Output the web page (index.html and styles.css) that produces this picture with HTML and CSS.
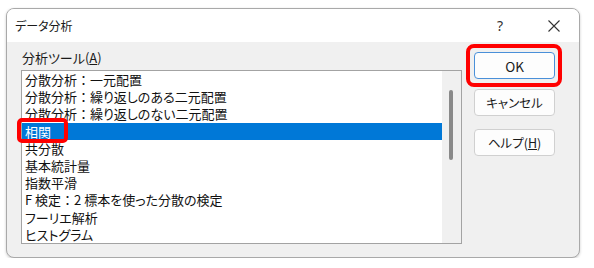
FILE: index.html
```html
<!DOCTYPE html>
<html lang="ja">
<head>
<meta charset="utf-8">
<title>データ分析</title>
<link rel="stylesheet" href="styles.css">
</head>
<body>
<div class="window">
  <div class="titlebar">
    <div class="title">データ分析</div>
    <div class="tb-btn help">?</div>
    <div class="tb-btn close">
      <svg width="12" height="12" viewBox="0 0 12 12"><path d="M0.5 0.5 L11.5 11.5 M11.5 0.5 L0.5 11.5" stroke="#333" stroke-width="1.1" fill="none"/></svg>
    </div>
  </div>
  <div class="content">
    <div class="left">
      <div class="label">分析ツール(<u>A</u>)</div>
      <div class="listbox">
        <div class="items">
          <div class="item">分散分析<span class="colon">：</span>一元配置</div>
          <div class="item">分散分析<span class="colon">：</span>繰り返しのある二元配置</div>
          <div class="item">分散分析<span class="colon">：</span>繰り返しのない二元配置</div>
          <div class="item selected">相関<span class="mark mark-item"></span></div>
          <div class="item">共分散</div>
          <div class="item">基本統計量</div>
          <div class="item">指数平滑</div>
          <div class="item">F 検定<span class="colon">：</span>2 標本を使った分散の検定</div>
          <div class="item">フーリエ解析</div>
          <div class="item">ヒストグラム</div>
        </div>
        <div class="scrollbar"><div class="thumb"></div></div>
      </div>
    </div>
    <div class="right">
      <div class="btn default">OK<span class="mark mark-ok"></span></div>
      <div class="btn">キャンセル</div>
      <div class="btn btn-help">ヘルプ(<u>H</u>)</div>
    </div>
  </div>
</div>
</body>
</html>
```
FILE: styles.css
```css
html, body {
  margin: 0;
  padding: 0;
  background: #ffffff;
}
body {
  font-family: "Noto Sans CJK JP", "Noto Sans", sans-serif;
  font-feature-settings: "palt";
  color: #1a1a1a;
  padding-top: 8px;
  padding-left: 6px;
}
.window {
  width: 572px;
  height: 248px;
  border: 1px solid #a9a9a9;
  border-radius: 8px;
  overflow: hidden;
  background: #f0f0f0;
  box-shadow: 0 1px 3px rgba(0,0,0,0.2);
  display: flex;
  flex-direction: column;
}
.titlebar {
  height: 33px;
  background: #ffffff;
  display: flex;
  align-items: center;
  flex: none;
}
.title {
  flex: 1;
  padding-left: 8px;
  font-size: 12px;
  color: #1a1a1a;
}
.tb-btn {
  width: 46px;
  height: 33px;
  display: flex;
  align-items: center;
  justify-content: center;
  color: #333;
}
.help {
  font-size: 14px;
  margin-right: 8px;
  font-family: "Noto Sans", sans-serif;
}
.close {
  margin-right: 2px;
}
.content {
  flex: 1;
  display: flex;
  padding: 10px 0 0 14px;
}
.left {
  display: flex;
  flex-direction: column;
}
.label {
  font-size: 13px;
  line-height: 16px;
  padding-left: 1px;
  margin-top: -2px;
  height: 20px;
}
.listbox {
  width: 439px;
  height: 172px;
  border: 1px solid #a3a3a3;
  background: #ffffff;
  display: flex;
}
.items {
  width: 420px;
  flex: none;
}
.item {
  position: relative;
  height: 17.2px;
  line-height: 17.2px;
  font-size: 13px;
  padding-left: 3px;
  white-space: nowrap;
  color: #111;
}
.colon {
  font-feature-settings: normal;
}
.item.selected {
  background: #0078d7;
  color: #ffffff;
}
.scrollbar {
  flex: 1;
  background: #f0f0f0;
  position: relative;
}
.thumb {
  position: absolute;
  left: 7px;
  top: 19px;
  width: 4px;
  height: 70px;
  border-radius: 2px;
  background: #8a8a8a;
}
.mark {
  position: absolute;
  border: 4px solid #ff0000;
  box-sizing: border-box;
  pointer-events: none;
}
.mark-item {
  left: -5px;
  top: -5px;
  width: 51px;
  height: 25px;
  border-radius: 5px;
}
.right {
  display: flex;
  flex-direction: column;
  margin-left: 12px;
}
.btn {
  position: relative;
  width: 81px;
  height: 27px;
  box-sizing: border-box;
  border: 1px solid #d0d0d0;
  border-radius: 4px;
  background: #fdfdfd;
  display: flex;
  align-items: center;
  justify-content: center;
  font-size: 12.5px;
  color: #1a1a1a;
  margin-bottom: 10px;
}
.btn.default {
  border-color: #4a90d9;
  font-size: 13.5px;
}
.btn-help {
  margin-top: 3px;
}
.mark-ok {
  left: -9px;
  top: -9px;
  right: -8px;
  bottom: -9px;
  border-radius: 8px;
}
```
